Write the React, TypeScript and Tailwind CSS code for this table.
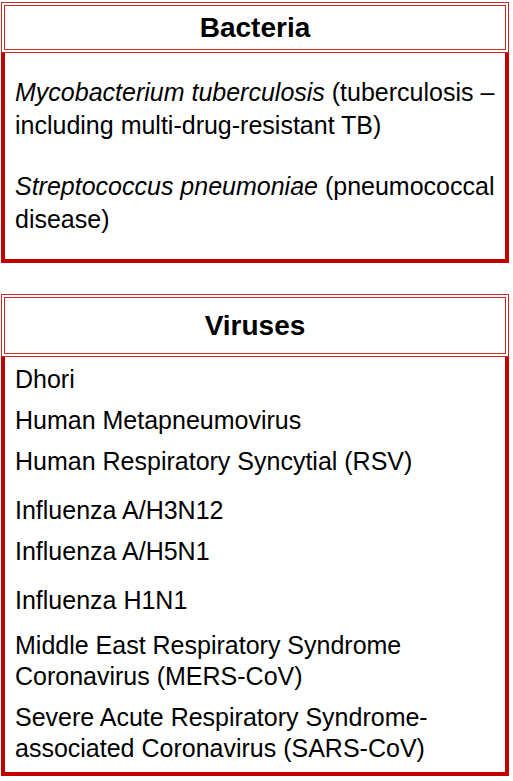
import React from 'react';

const VIRUSES: { lines: string[]; gap: string }[] = [
  { lines: ['Dhori'], gap: 'mt-0' },
  { lines: ['Human Metapneumovirus'], gap: 'mt-[10px]' },
  { lines: ['Human Respiratory Syncytial (RSV)'], gap: 'mt-[10px]' },
  { lines: ['Influenza A/H3N12'], gap: 'mt-[18px]' },
  { lines: ['Influenza A/H5N1'], gap: 'mt-[10px]' },
  { lines: ['Influenza H1N1'], gap: 'mt-[18px]' },
  { lines: ['Middle East Respiratory Syndrome', 'Coronavirus (MERS-CoV)'], gap: 'mt-[14px]' },
  { lines: ['Severe Acute Respiratory Syndrome-', 'associated Coronavirus (SARS-CoV)'], gap: 'mt-[10px]' },
];

function Header({ title, tall }: { title: string; tall?: boolean }) {
  return (
    <div
      className={`border-[4px] border-double border-[#cc2a2a] flex items-center justify-center ${
        tall ? 'h-[63px]' : 'h-[51px]'
      }`}
    >
      <span className="text-[28px] font-bold text-black leading-none">{title}</span>
    </div>
  );
}

export default function App() {
  return (
    <div
      className="w-[513px] h-[781px] bg-white pl-[1px] pt-[2px]"
      style={{ fontFamily: '"Liberation Sans", Arial, sans-serif' }}
    >
      <div className="w-[508px]">
        <Header title="Bacteria" />
        <div className="border-x-[4px] border-b-[4px] border-[#c00000] pl-[10px] pr-2 pt-[23px] pb-[23px] text-[25px] leading-[33px] text-black">
          <p>
            <i>Mycobacterium tuberculosis</i> (tuberculosis –
            <br />
            including multi-drug-resistant TB)
          </p>
          <p className="mt-[28px]">
            <i>Streptococcus pneumoniae</i> (pneumococcal
            <br />
            disease)
          </p>
        </div>
      </div>

      <div className="w-[508px] mt-[31px]">
        <Header title="Viruses" tall />
        <div className="border-x-[4px] border-b-[4px] border-[#c00000] pl-[10px] pr-2 pt-[7px] pb-[8px] text-[25px] leading-[31px] text-black">
          {VIRUSES.map((v) => (
            <div key={v.lines[0]} className={v.gap}>
              {v.lines.map((l) => (
                <div key={l}>{l}</div>
              ))}
            </div>
          ))}
        </div>
      </div>
    </div>
  );
}
